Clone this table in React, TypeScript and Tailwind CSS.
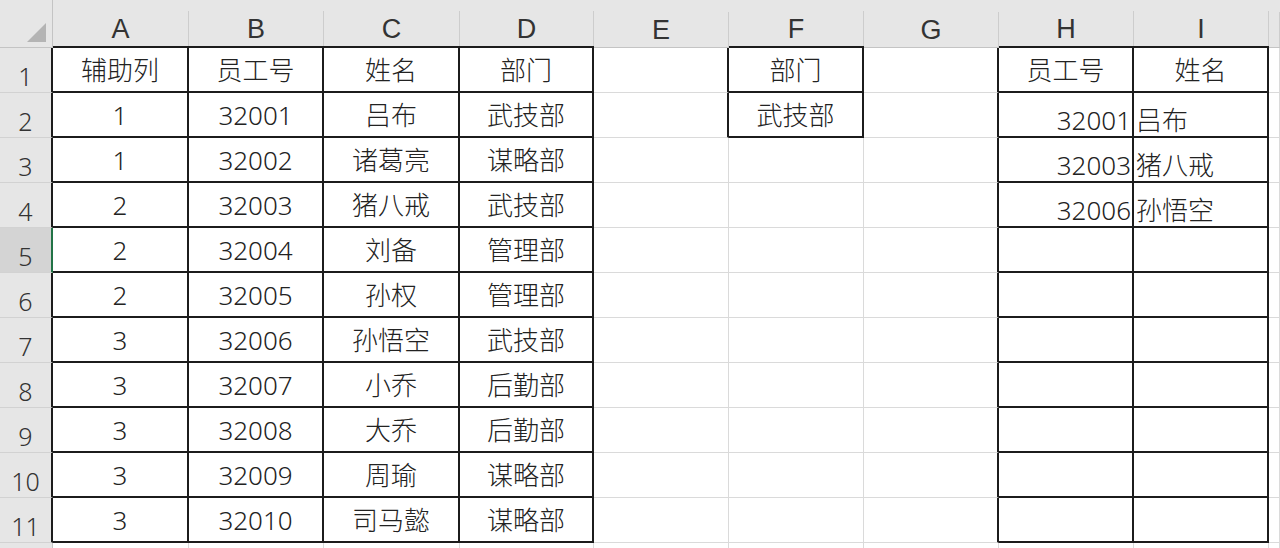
const LETTERS = ['', 'A', 'B', 'C', 'D', 'E', 'F', 'G', 'H', 'I', ''];

const DATA: string[][] = [
  ['辅助列', '员工号', '姓名', '部门', '', '部门', '', '员工号', '姓名'],
  ['1', '32001', '吕布', '武技部', '', '武技部', '', '32001', '吕布'],
  ['1', '32002', '诸葛亮', '谋略部', '', '', '', '32003', '猪八戒'],
  ['2', '32003', '猪八戒', '武技部', '', '', '', '32006', '孙悟空'],
  ['2', '32004', '刘备', '管理部'],
  ['2', '32005', '孙权', '管理部'],
  ['3', '32006', '孙悟空', '武技部'],
  ['3', '32007', '小乔', '后勤部'],
  ['3', '32008', '大乔', '后勤部'],
  ['3', '32009', '周瑜', '谋略部'],
  ['3', '32010', '司马懿', '谋略部'],
];

// bordered ranges: [rowFrom, rowTo, colFrom, colTo]
const RANGES = [
  [1, 11, 1, 4],
  [1, 2, 6, 6],
  [1, 11, 8, 9],
];

const inRange = (r: number, c: number) =>
  RANGES.some(([r1, r2, c1, c2]) => r >= r1 && r <= r2 && c >= c1 && c <= c2);

function Corner() {
  return (
    <div className="h-[48px] bg-[#e6e6e6] border-b border-b-[#c4c4c4] border-r border-r-[#c4c4c4] flex items-end justify-end pr-[6px] pb-[5px]">
      <svg width="19" height="19" viewBox="0 0 19 19">
        <polygon points="19,0 19,19 0,19" fill="#b4b4b4" />
      </svg>
    </div>
  );
}

function ColHeader({ c }: { c: number }) {
  const bottom = inRange(1, c) ? 'border-b-2 border-b-[#1c1c1c]' : 'border-b border-b-[#c4c4c4]';
  return (
    <div className={`h-[48px] bg-[#e6e6e6] flex ${bottom}`}>
      <div className="flex-1 flex items-end justify-center pb-[3px] text-[27px] leading-none text-[#333] font-[family-name:Liberation_Sans]">
        {LETTERS[c]}
      </div>
      <div className="self-end w-px h-[35px] bg-[#cdcdcd]" />
    </div>
  );
}

function RowHeader({ r, h }: { r: number; h: string }) {
  const selected = r === 5;
  const right = selected
    ? 'border-r-2 border-r-[#217346]'
    : inRange(r, 1)
      ? 'border-r-2 border-r-[#1c1c1c]'
      : 'border-r border-r-[#c4c4c4]';
  const bg = selected ? 'bg-[#d4d4d4]' : 'bg-[#e6e6e6]';
  return (
    <div className={`${h} ${bg} ${right} border-b border-b-[#d2d2d2] flex items-end justify-center pb-[3px] text-[25px] leading-none text-[#333] font-light`}>
      {r <= 11 ? r : ''}
    </div>
  );
}

function Cell({ r, c, text, h }: { r: number; c: number; text: string; h: string }) {
  const right =
    inRange(r, c) || inRange(r, c + 1) ? 'border-r-2 border-r-[#1c1c1c]' : 'border-r border-r-[#dadada]';
  const bottom =
    inRange(r, c) || inRange(r + 1, c) ? 'border-b-2 border-b-[#1c1c1c]' : 'border-b border-b-[#dadada]';
  let align = 'items-center justify-center';
  if (c >= 8 && r >= 2) align = c === 8 ? 'items-end justify-end pb-[3px] pr-[1px]' : 'items-end justify-start pb-[3px] pl-[2px]';
  return (
    <div className={`${h} bg-white ${right} ${bottom} flex ${align} text-[26px] leading-none text-[#222] font-light overflow-hidden whitespace-nowrap`}>
      {text}
    </div>
  );
}

export default function App() {
  const rows = Array.from({ length: 12 }, (_, i) => i + 1);
  return (
    <div
      className="w-[1280px] h-[548px] overflow-hidden bg-white"
      style={{ fontFamily: '"Noto Sans", "Noto Sans CJK SC", sans-serif' }}
    >
      <div className="grid grid-cols-[53px_136px_135px_136px_134px_135px_135px_135px_135px_135px_1fr]">
        <Corner />
        {LETTERS.slice(1).map((_, i) => (
          <ColHeader key={i} c={i + 1} />
        ))}
        {rows.map((r) => {
          const h = r === 12 ? 'h-[20px]' : 'h-[45px]';
          return [
            <RowHeader key={`h${r}`} r={r} h={h} />,
            ...Array.from({ length: 10 }, (_, i) => {
              const c = i + 1;
              const text = DATA[r - 1]?.[c - 1] ?? '';
              return <Cell key={`${r}-${c}`} r={r} c={c} text={text} h={h} />;
            }),
          ];
        })}
      </div>
    </div>
  );
}
